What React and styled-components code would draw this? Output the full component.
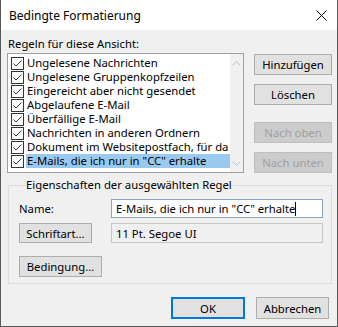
import React from "react";
import styled, { createGlobalStyle } from "styled-components";

const Global = createGlobalStyle`
  html, body { margin: 0; padding: 0; background: #ffffff; }
  body { font-family: "Noto Sans", "Segoe UI", sans-serif; font-size: 11.3px; color: #000; }
`;

const Window = styled.div`
  box-sizing: border-box;
  width: 338px;
  height: 327px;
  border: 1px solid #595959;
  border-top: none;
  background: #f0f0f0;
  display: flex;
  flex-direction: column;
`;

const TitleBar = styled.div`
  height: 30px;
  background: #ffffff;
  display: flex;
  align-items: center;
  justify-content: space-between;
  padding: 0 10px 0 8px;
  font-size: 12px;
`;

const Body = styled.div`
  flex: 1;
  display: flex;
  flex-direction: column;
  padding: 6px 6px 0 6px;
`;

const Caption = styled.div`
  line-height: 16px;
  margin-left: 1px;
`;

const TopRow = styled.div`
  display: flex;
  align-items: flex-start;
  margin-top: 1px;
`;

const ListBox = styled.div`
  box-sizing: border-box;
  width: 237px;
  height: 120px;
  border: 1px solid #a0a0a0;
  background: #fff;
  display: flex;
`;

const Rows = styled.div`
  flex: 1;
  padding: 2px 0 0 3px;
`;

const Row = styled.div`
  display: flex;
  align-items: center;
  height: 14px;
  white-space: nowrap;
  overflow: hidden;
`;

const RowText = styled.span`
  margin-left: 2px;
  padding: 0 2px 0 1px;
  line-height: 14px;
  flex: ${(p) => (p.$selected ? 1 : "none")};
  background: ${(p) => (p.$selected ? "#99c9ef" : "transparent")};
`;

const ScrollBar = styled.div`
  width: 17px;
  background: #f0f0f0;
  display: flex;
  flex-direction: column;
  justify-content: space-between;
  align-items: center;
  padding: 7px 0 6px;
`;

const ButtonColumn = styled.div`
  display: flex;
  flex-direction: column;
  margin-left: 10px;
  margin-top: 1px;
`;

const Button = styled.button`
  box-sizing: border-box;
  width: ${(p) => p.$w || 78}px;
  height: ${(p) => p.$h || 21}px;
  margin-top: ${(p) => p.$mt || 0}px;
  font: inherit;
  padding: 0;
  color: ${(p) => (p.disabled ? "#a0a0a0" : "#000")};
  background: ${(p) => (p.disabled ? "#cccccc" : "#e1e1e1")};
  border: ${(p) =>
    p.$default ? "2px solid #0078d7" : p.disabled ? "1px solid #bfbfbf" : "1px solid #adadad"};
  border-radius: 0;
`;

const Group = styled.fieldset`
  margin: 5px 0 0 1px;
  width: 324px;
  box-sizing: border-box;
  height: 106px;
  border: 1px solid #dcdcdc;
  padding: 3px 8px 0 10px;
  display: flex;
  flex-direction: column;
`;

const Legend = styled.legend`
  padding: 0 1px;
  margin-left: 6px;
  line-height: 14px;
`;

const FieldRow = styled.div`
  display: flex;
  align-items: center;
  justify-content: space-between;
  margin-top: ${(p) => p.$mt || 0}px;
`;

const Field = styled.div`
  box-sizing: border-box;
  width: 212px;
  height: ${(p) => (p.$readonly ? 20 : 19)}px;
  border: 1px solid ${(p) => (p.$readonly ? "#c4c4c4" : "#8aa4c4")};
  background: ${(p) => (p.$readonly ? "#f0f0f0" : "#fff")};
  padding: 0 0 0 4px;
  display: flex;
  align-items: center;
  white-space: nowrap;
`;

const Caret = styled.span`
  display: inline-block;
  width: 1px;
  height: 14px;
  background: #000;
`;

const Footer = styled.div`
  display: flex;
  justify-content: flex-end;
  gap: 11px;
  padding: 13px 2px 0 0;
`;

const Check = () => (
  <svg width="13" height="13" viewBox="0 0 13 13">
    <rect x="0.5" y="0.5" width="12" height="12" fill="#fff" stroke="#333" />
    <polyline points="2.5,6.5 5,9 10.5,3.5" fill="none" stroke="#333" strokeWidth="1" />
  </svg>
);

const Chevron = ({ down }) => (
  <svg width="9" height="5" viewBox="0 0 9 5">
    <polyline
      points={down ? "0.5,0.5 4.5,4.5 8.5,0.5" : "0.5,4.5 4.5,0.5 8.5,4.5"}
      fill="none"
      stroke="#c0c0c0"
    />
  </svg>
);

const rules = [
  "Ungelesene Nachrichten",
  "Ungelesene Gruppenkopfzeilen",
  "Eingereicht aber nicht gesendet",
  "Abgelaufene E-Mail",
  "Überfällige E-Mail",
  "Nachrichten in anderen Ordnern",
  "Dokument im Websitepostfach, für da",
  'E-Mails, die ich nur in "CC" erhalte',
];

export default function App() {
  return (
    <>
      <Global />
      <Window>
        <TitleBar>
          <span>Bedingte Formatierung</span>
          <svg width="11" height="11" viewBox="0 0 11 11">
            <path d="M0.5 0.5 L10.5 10.5 M10.5 0.5 L0.5 10.5" stroke="#000" strokeWidth="1" />
          </svg>
        </TitleBar>
        <Body>
          <Caption>Regeln für diese Ansicht:</Caption>
          <TopRow>
            <ListBox>
              <Rows>
                {rules.map((r, i) => (
                  <Row key={r}>
                    <Check />
                    <RowText $selected={i === rules.length - 1}>{r}</RowText>
                  </Row>
                ))}
              </Rows>
              <ScrollBar>
                <Chevron />
                <Chevron down />
              </ScrollBar>
            </ListBox>
            <ButtonColumn>
              <Button>Hinzufügen</Button>
              <Button $mt={9}>Löschen</Button>
              <Button $mt={17} disabled>Nach oben</Button>
              <Button $mt={9} disabled>Nach unten</Button>
            </ButtonColumn>
          </TopRow>
          <Group>
            <Legend>Eigenschaften der ausgewählten Regel</Legend>
            <FieldRow $mt={4}>
              <span>Name:</span>
              <Field>
                E-Mails, die ich nur in "CC" erhalte
                <Caret />
              </Field>
            </FieldRow>
            <FieldRow $mt={5}>
              <Button $w={73} $h={20}>Schriftart...</Button>
              <Field $readonly>11 Pt. Segoe UI</Field>
            </FieldRow>
            <FieldRow $mt={13}>
              <Button $w={83} $h={21}>Bedingung...</Button>
            </FieldRow>
          </Group>
          <Footer>
            <Button $default $w={74} $h={22}>OK</Button>
            <Button $w={73} $h={22}>Abbrechen</Button>
          </Footer>
        </Body>
      </Window>
    </>
  );
}
